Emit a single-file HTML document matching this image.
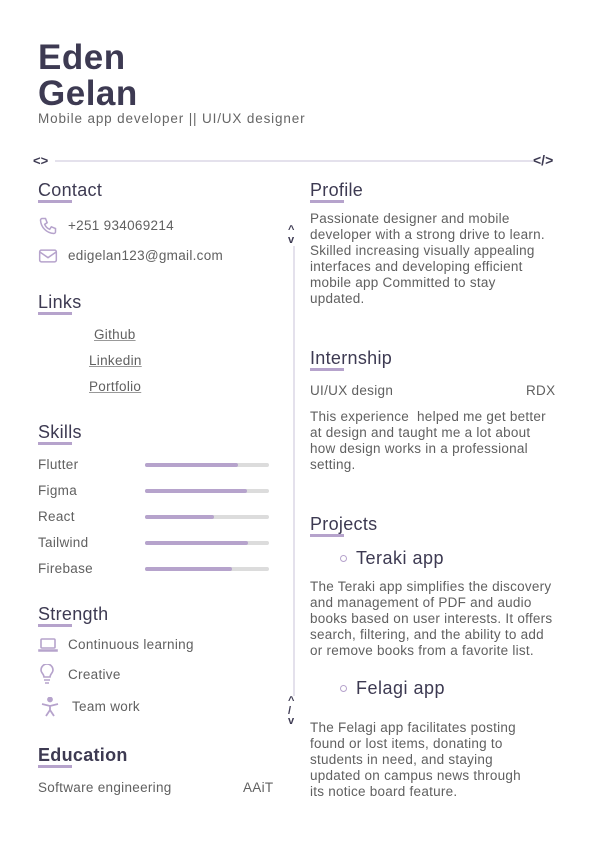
<!DOCTYPE html>
<html><head><meta charset="utf-8"><style>
*{margin:0;padding:0;box-sizing:border-box}
body{width:595px;height:842px;background:#fff;position:relative;font-family:"Liberation Sans",sans-serif;color:#5a5a5a;overflow:hidden}
.a{position:absolute;white-space:nowrap}
.name{font-size:35px;color:#3d3a52;font-weight:bold;line-height:36px;letter-spacing:0.5px}
.h{font-size:18px;color:#3d3a52;line-height:20px;letter-spacing:0.3px}
.h::after{content:"";position:absolute;left:0;top:20px;width:34px;height:2.5px;background:#b6a3cc}
.t{font-size:13.5px;line-height:16px;color:#606060;letter-spacing:0.3px}
.p{font-size:13.5px;line-height:16px;color:#606060;letter-spacing:0.25px}
.lk{font-size:13.5px;color:#606060;text-decoration:underline;text-decoration-color:#999;letter-spacing:0.3px}
.bar{position:absolute;left:145px;width:124px;height:4px;background:#dcdcdc;border-radius:2px}
.bar i{display:block;height:4px;background:#b6a3cc;border-radius:2px}
.cd{font-size:13px;font-weight:bold;color:#3d3a52}
</style></head><body>
<div class="a name" style="left:38px;top:40px">Eden</div>
<div class="a name" style="left:38px;top:76px">Gelan</div>
<div class="a" style="left:38px;top:111px;font-size:13.5px;color:#666;letter-spacing:0.85px">Mobile app developer || UI/UX designer</div>

<div class="a" style="left:55px;top:160px;width:478px;height:2px;background:#e4e1ec"></div>
<div class="a cd" style="left:33px;top:153px">&lt;&gt;</div>
<div class="a cd" style="left:533px;top:152px;font-size:14px">&lt;/&gt;</div>

<div class="a" style="left:293px;top:246px;width:2px;height:450px;background:#e4e1ec"></div>
<div class="a cd" style="left:288px;top:225px;font-size:11px;line-height:10px">^<br>v</div>
<div class="a cd" style="left:288px;top:696px;font-size:11px;line-height:10px;width:12px">^<br>/<br>v</div>

<!-- Left -->
<div class="a h" style="left:38px;top:180px">Contact</div>
<svg class="a" style="left:38px;top:216px" width="20" height="20" viewBox="0 0 24 24" fill="none" stroke="#b6a3cc" stroke-width="1.8"><path d="M5 3h4l2 5-3 2a11 11 0 0 0 6 6l2-3 5 2v4a2 2 0 0 1-2 2A17 17 0 0 1 3 5a2 2 0 0 1 2-2"/></svg>
<div class="a t" style="left:68px;top:218px">+251 934069214</div>
<svg class="a" style="left:38px;top:247px" width="20" height="18" viewBox="0 0 24 20" fill="none" stroke="#b6a3cc" stroke-width="1.8"><rect x="2" y="3" width="20" height="14" rx="2"/><path d="M2 5l10 7 10-7"/></svg>
<div class="a t" style="left:68px;top:248px">edigelan123@gmail.com</div>

<div class="a h" style="left:38px;top:292px">Links</div>
<div class="a lk" style="left:94px;top:327px">Github</div>
<div class="a lk" style="left:89px;top:353px">Linkedin</div>
<div class="a lk" style="left:89px;top:379px">Portfolio</div>

<div class="a h" style="left:38px;top:422px">Skills</div>
<div class="a t" style="left:38px;top:457px">Flutter</div><div class="bar" style="top:463px"><i style="width:93px"></i></div>
<div class="a t" style="left:38px;top:483px">Figma</div><div class="bar" style="top:489px"><i style="width:102px"></i></div>
<div class="a t" style="left:38px;top:509px">React</div><div class="bar" style="top:515px"><i style="width:69px"></i></div>
<div class="a t" style="left:38px;top:535px">Tailwind</div><div class="bar" style="top:541px"><i style="width:103px"></i></div>
<div class="a t" style="left:38px;top:561px">Firebase</div><div class="bar" style="top:567px"><i style="width:87px"></i></div>

<div class="a h" style="left:38px;top:604px">Strength</div>
<svg class="a" style="left:38px;top:637px" width="20" height="16" viewBox="0 0 20 16" fill="none" stroke="#b6a3cc" stroke-width="1.6"><rect x="3" y="2" width="14" height="9" rx="1"/><path d="M1 13h18v1H1z"/></svg>
<div class="a t" style="left:68px;top:637px">Continuous learning</div>
<svg class="a" style="left:40px;top:664px" width="14" height="20" viewBox="0 0 14 20" fill="none" stroke="#b6a3cc" stroke-width="1.6"><path d="M4 13c0-3-3-4-3-7a6 6 0 0 1 12 0c0 3-3 4-3 7z"/><path d="M4 16h6M5 19h4"/></svg>
<div class="a t" style="left:68px;top:667px">Creative</div>
<svg class="a" style="left:41px;top:697px" width="18" height="20" viewBox="0 0 18 20" fill="none" stroke="#b6a3cc" stroke-width="1.8"><circle cx="9" cy="2.5" r="2" fill="#b6a3cc"/><path d="M1 7l8 2 8-2M9 9v4l-4 6M9 13l4 6"/></svg>
<div class="a t" style="left:72px;top:699px">Team work</div>

<div class="a h" style="left:38px;top:745px;font-weight:bold">Education</div>
<div class="a t" style="left:38px;top:780px">Software engineering</div>
<div class="a t" style="left:243px;top:780px">AAiT</div>

<!-- Right -->
<div class="a h" style="left:310px;top:180px">Profile</div>
<div class="a p" style="left:310px;top:211px">Passionate designer and mobile<br>developer with a strong drive to learn.<br>Skilled increasing visually appealing<br>interfaces and developing efficient<br>mobile app Committed to stay<br>updated.</div>

<div class="a h" style="left:310px;top:348px">Internship</div>
<div class="a t" style="left:310px;top:383px">UI/UX design</div>
<div class="a t" style="left:526px;top:383px">RDX</div>
<div class="a p" style="left:310px;top:409px">This experience&nbsp; helped me get better<br>at design and taught me a lot about<br>how design works in a professional<br>setting.</div>

<div class="a h" style="left:310px;top:514px">Projects</div>
<div class="a" style="left:340px;top:555px;width:7px;height:7px;border:1.5px solid #b6a3cc;border-radius:50%"></div>
<div class="a" style="left:356px;top:548px;font-size:18px;color:#3d3a52;letter-spacing:0.5px">Teraki app</div>
<div class="a p" style="left:310px;top:579px">The Teraki app simplifies the discovery<br>and management of PDF and audio<br>books based on user interests. It offers<br>search, filtering, and the ability to add<br>or remove books from a favorite list.</div>
<div class="a" style="left:340px;top:685px;width:7px;height:7px;border:1.5px solid #b6a3cc;border-radius:50%"></div>
<div class="a" style="left:356px;top:678px;font-size:18px;color:#3d3a52;letter-spacing:0.5px">Felagi app</div>
<div class="a p" style="left:310px;top:720px">The Felagi app facilitates posting<br>found or lost items, donating to<br>students in need, and staying<br>updated on campus news through<br>its notice board feature.</div>
</body></html>
